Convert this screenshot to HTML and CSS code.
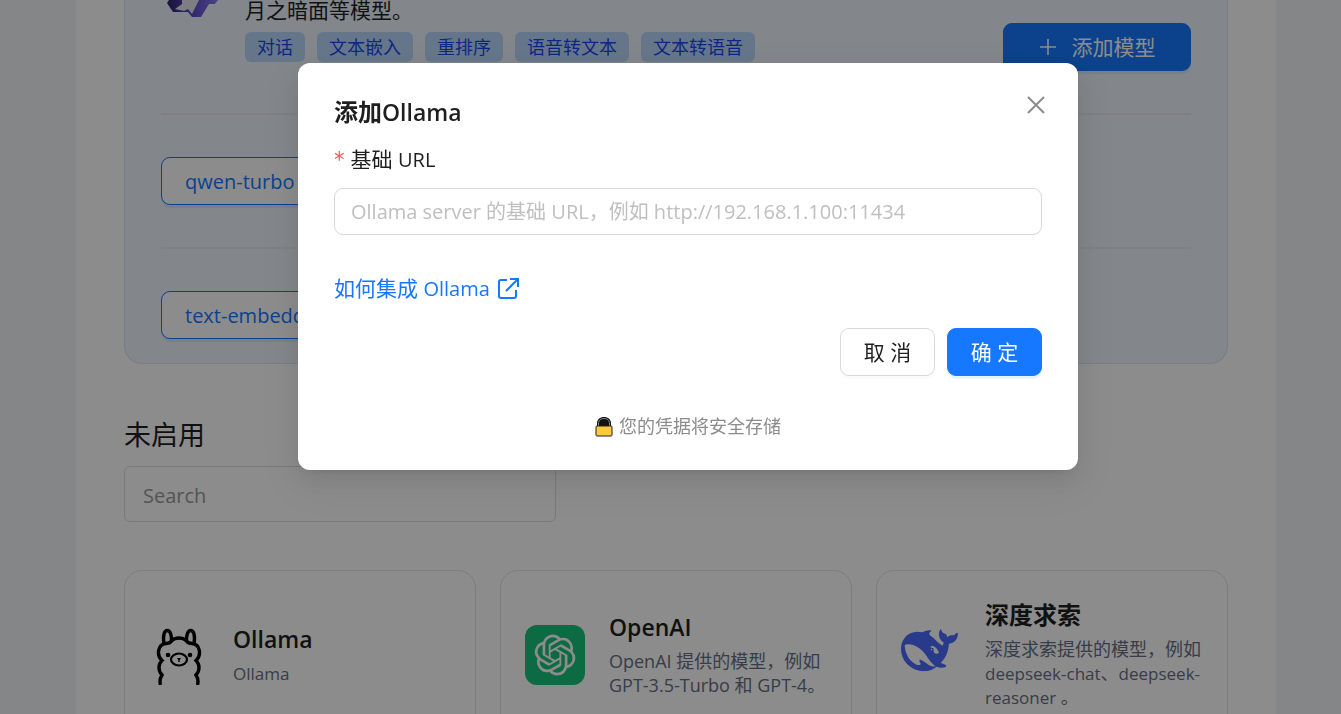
FILE: index.html
```
<!DOCTYPE html>
<html lang="zh-CN">
<head>
  <meta charset="utf-8">
  <title>模型</title>
  <link rel="stylesheet" href="styles.css">
</head>
<body>
  <main class="page">
    <section class="provider">
      <div class="provider-head">
        <svg class="provider-logo" viewBox="0 0 60 71" aria-hidden="true">
          <defs>
            <linearGradient id="tongyi" x1="0" x2="1" y1="0" y2="0">
              <stop offset="0" stop-color="#2c2468"/>
              <stop offset="0.5" stop-color="#5a4bc8"/>
              <stop offset="1" stop-color="#8c7cf5"/>
            </linearGradient>
          </defs>
          <path d="M8 0L6 3l6 9h15l4 5h9l8-13h6l3-4z" fill="url(#tongyi)"/>
          <path d="M14 9l7-5V0h17l-7 14-4-5-4 2z" fill="#e4e4ee"/>
        </svg>
        <div class="provider-info">
          <p class="provider-desc">月之暗面等模型。</p>
          <div class="tags">
            <span class="tag">对话</span>
            <span class="tag">文本嵌入</span>
            <span class="tag">重排序</span>
            <span class="tag">语音转文本</span>
            <span class="tag">文本转语音</span>
          </div>
        </div>
        <button class="btn btn-primary btn-add" type="button">
          <svg width="18" height="18" viewBox="0 0 18 18" aria-hidden="true"><path d="M9 1v16M1 9h16" stroke="currentColor" stroke-width="1.6"/></svg>
          添加模型
        </button>
      </div>
      <hr class="divider">
      <button class="btn btn-model" type="button">qwen-turbo</button>
      <hr class="divider">
      <button class="btn btn-model" type="button">text-embedding-v2</button>
    </section>

    <h2 class="section-title">未启用</h2>
    <input class="search" type="search" placeholder="Search" aria-label="Search">

    <div class="cards">
      <article class="card">
        <svg class="card-logo" viewBox="0 0 60 60" aria-hidden="true">
          <g fill="none" stroke="#000" stroke-width="3.4">
            <path d="M11.500 60C10.500 56 11 53 13 50C9 46 9 39 13 35.500C7 30 9 19 17 18.500C19 18.500 21 18 22.500 16C26 12 34 12 37.500 16C39 18 41 18.500 43 18.500C51 19 53 30 47 35.500C51 39 51 46 47 50C49 53 49.500 56 48.500 60"/>
            <path d="M15 19C13.500 10 15.500 5.500 18.300 5.500C21.500 5.500 23 11 22.300 17M45 19C46.500 10 44.500 5.500 41.700 5.500C38.500 5.500 37 11 37.700 17"/>
            <ellipse cx="30" cy="34.500" rx="8" ry="6" stroke-width="2.200"/>
          </g>
          <circle cx="19" cy="30" r="2.300"/>
          <circle cx="41" cy="30" r="2.300"/>
          <path d="M28 33h4l-1.300 2v2h-1.400v-2z"/>
        </svg>
        <div class="card-body">
          <h3 class="card-title"><span class="en">Ollama</span></h3>
          <p class="card-desc"><span class="en">Ollama</span></p>
        </div>
      </article>
      <article class="card">
        <svg class="card-logo" viewBox="0 0 60 60" aria-hidden="true">
          <rect width="60" height="60" rx="12" fill="#19c37d"/>
          <path transform="translate(9.600 9.600) scale(1.700)" fill="#fff" d="M22.2819 9.8211a5.9847 5.9847 0 0 0-.5157-4.9108 6.0462 6.0462 0 0 0-6.5098-2.9A6.0651 6.0651 0 0 0 4.9807 4.1818a5.9847 5.9847 0 0 0-3.9977 2.9 6.0462 6.0462 0 0 0 .7427 7.0966 5.98 5.98 0 0 0 .511 4.9107 6.051 6.051 0 0 0 6.5146 2.9001A5.9847 5.9847 0 0 0 13.2599 24a6.0557 6.0557 0 0 0 5.7718-4.2058 5.9894 5.9894 0 0 0 3.9977-2.9001 6.0557 6.0557 0 0 0-.7475-7.0729zm-9.022 12.6081a4.4755 4.4755 0 0 1-2.8764-1.0408l.1419-.0804 4.7783-2.7582a.7948.7948 0 0 0 .3927-.6813v-6.7369l2.02 1.1686a.071.071 0 0 1 .038.052v5.5826a4.504 4.504 0 0 1-4.4945 4.4944zm-9.6607-4.1254a4.4708 4.4708 0 0 1-.5346-3.0137l.142.0852 4.783 2.7582a.7712.7712 0 0 0 .7806 0l5.8428-3.3685v2.3324a.0804.0804 0 0 1-.0332.0615L9.74 19.9502a4.4992 4.4992 0 0 1-6.1408-1.6464zM2.3408 7.8956a4.485 4.485 0 0 1 2.3655-1.9728V11.6a.7664.7664 0 0 0 .3879.6765l5.8144 3.3543-2.0201 1.1685a.0757.0757 0 0 1-.071 0l-4.8303-2.7865A4.504 4.504 0 0 1 2.3408 7.872zm16.5963 3.8558L13.1038 8.364 15.1192 7.2a.0757.0757 0 0 1 .071 0l4.8303 2.7913a4.4944 4.4944 0 0 1-.6765 8.1042v-5.6772a.79.79 0 0 0-.407-.667zm2.0107-3.0231l-.142-.0852-4.7735-2.7818a.7759.7759 0 0 0-.7854 0L9.409 9.2297V6.8974a.0662.0662 0 0 1 .0284-.0615l4.8303-2.7866a4.4992 4.4992 0 0 1 6.6802 4.66zM8.3065 12.863l-2.02-1.1638a.0804.0804 0 0 1-.038-.0567V6.0742a4.4992 4.4992 0 0 1 7.3757-3.4537l-.142.0805L8.704 5.459a.7948.7948 0 0 0-.3927.6813zm1.0976-2.3654l2.602-1.4998 2.6069 1.4998v2.9994l-2.5974 1.4997-2.6067-1.4997Z"/>
        </svg>
        <div class="card-body">
          <h3 class="card-title"><span class="en">OpenAI</span></h3>
          <p class="card-desc">OpenAI 提供的模型，例如 GPT-3.5-Turbo 和 GPT-4。</p>
        </div>
      </article>
      <article class="card">
        <svg class="card-logo" viewBox="0 1.200 25.300 25.300" aria-hidden="true">
          <path fill="#4d6bfe" d="M23.748 4.482c-.254-.124-.364.113-.512.234-.051.039-.094.09-.137.136-.372.397-.806.657-1.373.626-.829-.046-1.537.214-2.163.848-.133-.782-.575-1.248-1.247-1.548-.352-.156-.708-.311-.955-.65-.172-.241-.219-.51-.305-.774-.055-.16-.11-.323-.293-.35-.2-.031-.278.136-.356.276-.313.572-.434 1.202-.422 1.84.027 1.436.633 2.58 1.838 3.393.137.093.172.187.129.323-.082.28-.18.552-.266.833-.055.179-.137.217-.329.14a5.526 5.526 0 01-1.736-1.18c-.857-.828-1.631-1.742-2.597-2.458a11.365 11.365 0 00-.689-.471c-.985-.957.13-1.743.388-1.836.27-.098.093-.432-.779-.428-.872.004-1.67.295-2.687.684a3.055 3.055 0 01-.465.137 9.597 9.597 0 00-2.883-.102c-1.885.21-3.39 1.102-4.497 2.623C.082 8.606-.231 10.684.152 12.85c.403 2.284 1.569 4.175 3.36 5.653 1.858 1.533 3.997 2.284 6.438 2.14 1.482-.085 3.133-.284 4.994-1.86.47.234.962.327 1.78.397.63.059 1.236-.03 1.705-.128.735-.156.684-.837.419-.961-2.155-1.004-1.682-.595-2.113-.926 1.096-1.296 2.746-2.642 3.392-7.003.05-.347.007-.565 0-.845-.004-.17.035-.237.23-.256a4.173 4.173 0 001.545-.475c1.396-.763 1.96-2.015 2.093-3.517.02-.23-.004-.467-.247-.588zM11.581 18c-2.089-1.642-3.102-2.183-3.52-2.16-.392.024-.321.471-.235.763.09.288.207.486.371.739.114.167.192.416-.113.603-.673.416-1.842-.14-1.897-.167-1.361-.802-2.5-1.86-3.301-3.307-.774-1.393-1.224-2.887-1.298-4.482-.02-.386.093-.522.477-.592a4.696 4.696 0 011.529-.039c2.132.312 3.946 1.265 5.468 2.774.868.86 1.525 1.887 2.202 2.891.72 1.066 1.494 2.082 2.48 2.914.348.292.625.514.891.677-.802.09-2.14.11-3.054-.614zm1-6.44a.306.306 0 01.415-.287.302.302 0 01.2.288.306.306 0 01-.31.307.303.303 0 01-.304-.308zm3.11 1.596c-.2.081-.399.151-.59.16a1.245 1.245 0 01-.798-.254c-.274-.23-.47-.358-.552-.758a1.73 1.73 0 01.016-.588c.07-.327-.008-.537-.239-.727-.187-.156-.426-.199-.688-.199a.559.559 0 01-.254-.078c-.11-.054-.2-.19-.114-.358.028-.054.16-.186.192-.21.356-.202.767-.136 1.146.016.352.144.618.408 1.001.782.391.451.462.576.685.914.176.265.336.537.445.848.067.195-.019.354-.25.452z"/>
        </svg>
        <div class="card-body">
          <h3 class="card-title">深度求索</h3>
          <p class="card-desc">深度求索提供的模型，例如 <span class="en">deepseek-chat</span>、<span class="en">deepseek-reasoner</span> 。</p>
        </div>
      </article>
    </div>
  </main>

  <div class="mask">
    <div class="modal" role="dialog" aria-modal="true" aria-labelledby="modal-title">
      <button class="modal-close" type="button" aria-label="关闭">
        <svg width="20" height="20" viewBox="0 0 20 20" aria-hidden="true"><path d="M2 2l16 16M18 2L2 18" stroke="currentColor" stroke-width="2"/></svg>
      </button>
      <h2 class="modal-title" id="modal-title">添加<span class="en">Ollama</span></h2>
      <form class="form">
        <label class="form-label" for="base-url"><span class="required">*</span>基础 <span class="en">URL</span></label>
        <input class="form-input" id="base-url" type="text" placeholder="Ollama server 的基础 URL，例如 http://192.168.1.100:11434">
        <a class="help-link" href="#"><span>如何集成 <span class="en">Ollama</span></span>
          <svg width="21" height="21" viewBox="0 0 21 21" fill="none" stroke="currentColor" stroke-width="2" aria-hidden="true"><path d="M9 2H3Q1 2 1 4v14q0 2 2 2h13q2 0 2-2v-6M12 1h8v8M20 1L8 13"/></svg>
        </a>
        <div class="actions">
          <button class="btn btn-action" type="button">取 消</button>
          <button class="btn btn-action btn-primary" type="button">确 定</button>
        </div>
      </form>
      <p class="note">
        <svg width="18" height="21" viewBox="0 0 18 21" aria-hidden="true">
          <path d="M2 11V8C2 3 5 1 9 1s7 2 7 7v3z" fill="#111"/>
          <path d="M3.500 10V8C3.500 4 6 2.500 9 2.500S14.500 4 14.500 8v2" fill="none" stroke="#8a8a8a"/>
          <rect x="1" y="10" width="16" height="10" rx="1" fill="#ffc83d" stroke="#222"/>
        </svg>
        您的凭据将安全存储
      </p>
    </div>
  </div>
</body>
</html>
```
FILE: styles.css
```
* { box-sizing: border-box; }
body {
  margin: 0;
  padding: 0 65px 0 76px;
  height: 100vh;
  overflow: hidden;
  background: #f2f4f7;
  color: #1f1f1f;
  font-family: "Open Sans", "Noto Sans CJK SC", sans-serif;
  font-size: 21px;
  line-height: 33px;
}
h2, h3, p { margin: 0; }
button, input { font: inherit; }

/* latin runs sit one step below the chinese text */
.en {
  font-size: 20px;
  line-height: 1;
}

.page {
  max-width: 1200px;
  min-height: 100vh;
  padding: 0 48px;
  background: #fff;
}

/* enabled provider */
.provider {
  padding: 0 36px 24px;
  border: 1px solid #dce4f0;
  border-top: 0;
  border-bottom-left-radius: 18px;
  border-bottom-right-radius: 18px;
  background: #eff4fb;
}
.provider-head {
  display: flex;
  align-items: flex-end;
  height: 71px;
}
.provider-logo {
  width: 60px;
  height: 71px;
  margin-right: 24px;
}
.provider-info {
  flex: 1;
  padding-bottom: 9px;
}
.provider-desc {
  line-height: 22px;
  padding-bottom: 11px;
}
.tags {
  display: flex;
  gap: 12px;
}
.tag {
  padding: 0 12px;
  border-radius: 6px;
  background: #bad8fc;
  color: #1b46f0;
  font-size: 18px;
  line-height: 30px;
}

.btn {
  height: 48px;
  border: 1px solid #d9d9d9;
  border-radius: 9px;
  background: #fff;
  color: #1f1f1f;
  box-shadow: 0 3px 0 rgba(0,0,0,0.02);
}
.btn-primary {
  border-color: #1677ff;
  background: #1677ff;
  color: #fff;
  box-shadow: 0 3px 0 rgba(5,145,255,0.1);
}
.btn-add {
  display: flex;
  align-items: center;
  justify-content: center;
  gap: 15px;
  width: 188px;
}
.btn-model {
  display: block;
  padding: 0 23px;
  border-color: #1677ff;
  color: #1677ff;
  font-size: 20px;
  box-shadow: 0 3px 0 rgba(5,145,255,0.1);
}
.divider {
  height: 2px;
  margin: 42px 0;
  border: 0;
  background: #e6eaf1;
}

/* disabled providers */
.section-title {
  margin: 50px 0 10px;
  font-size: 27px;
  font-weight: 400;
  line-height: 42px;
}
.search {
  display: block;
  width: 432px;
  height: 56px;
  padding: 2px 18px 0;
  border: 1px solid #dcdce4;
  border-radius: 6px;
  background: #fff;
  font-size: 20px;
}
.search::placeholder { color: #9a9a9a; }

.cards {
  display: grid;
  grid-template-columns: repeat(3, 1fr);
  gap: 24px;
  margin-top: 48px;
}
.card {
  display: flex;
  align-items: center;
  gap: 24px;
  min-height: 170px;
  padding: 24px;
  border: 1px solid #e4e4ec;
  border-radius: 18px;
}
.card-logo {
  flex: none;
  width: 60px;
  height: 60px;
}
.card-body { padding-bottom: 4px; }
.card-title {
  margin-bottom: 4px;
  font-size: 24px;
  font-weight: 600;
  line-height: 36px;
}
.card-title .en,
.modal-title .en { font-size: 23px; }
.card-desc {
  color: #667085;
  font-size: 18px;
  line-height: 24px;
}
.card-desc .en { font-size: 17px; }

/* modal */
.mask {
  position: fixed;
  inset: 0;
  display: flex;
  align-items: flex-start;
  justify-content: center;
  padding: 63px 0 0 35px;
  background: rgba(0,0,0,0.45);
}
.modal {
  position: relative;
  width: 780px;
  padding: 31px 36px 30px;
  border-radius: 12px;
  background: #fff;
  box-shadow: 0 9px 24px rgba(0,0,0,0.08), 0 5px 9px -6px rgba(0,0,0,0.12), 0 14px 42px 12px rgba(0,0,0,0.05);
}
.modal-close {
  position: absolute;
  top: 25px;
  right: 25px;
  display: flex;
  align-items: center;
  justify-content: center;
  width: 34px;
  height: 34px;
  padding: 0;
  border: 0;
  background: none;
  color: #8c8c8c;
}
.modal-title {
  font-size: 24px;
  font-weight: 600;
  line-height: 36px;
}
.form-label {
  display: block;
  margin-top: 13px;
}
.required {
  margin-right: 6px;
  color: #ff4d4f;
  font-family: "DejaVu Sans", sans-serif;
  line-height: 1;
}
.form-input {
  display: block;
  width: 100%;
  height: 47px;
  margin-top: 12px;
  padding: 0 16px;
  border: 1px solid #d9d9d9;
  border-radius: 9px;
  font-size: 20px;
}
.form-input::placeholder { color: #bfbfbf; }
.help-link {
  display: inline-flex;
  align-items: center;
  gap: 8px;
  margin-top: 37px;
  color: #1677ff;
  text-decoration: none;
}
.actions {
  display: flex;
  justify-content: flex-end;
  gap: 12px;
  margin-top: 23px;
}
.btn-action { width: 95px; padding: 0; }
.note {
  display: flex;
  align-items: center;
  justify-content: center;
  gap: 6px;
  margin-top: 36px;
  color: #8c8c8c;
  font-size: 18px;
  line-height: 28px;
}
```
